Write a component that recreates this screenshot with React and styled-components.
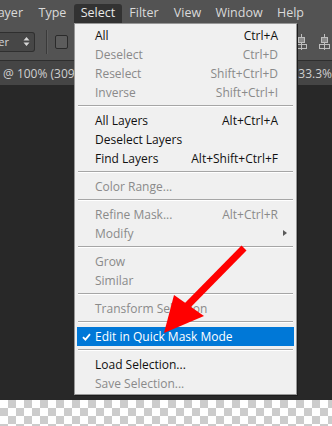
import React from "react";
import styled, { createGlobalStyle } from "styled-components";

const GlobalStyle = createGlobalStyle`
  html, body {
    margin: 0;
    padding: 0;
    background: #282828;
  }
  body {
    font-family: "Open Sans", "Noto Sans", sans-serif;
    overflow: hidden;
  }
`;

const Page = styled.div`
  position: relative;
  width: 332px;
  height: 426px;
  display: flex;
  flex-direction: column;
  overflow: hidden;
`;

const MenuBar = styled.div`
  height: 23px;
  padding-top: 4px;
  box-sizing: border-box;
  background: #535353;
  display: flex;
  align-items: stretch;
`;

const MenuTitle = styled.div`
  flex: 0 0 ${(p) => p.$w}px;
  display: flex;
  justify-content: ${(p) => (p.$clip ? "flex-end" : "center")};
  align-items: center;
  padding-right: ${(p) => (p.$clip ? 8 : 0)}px;
  box-sizing: border-box;
  overflow: hidden;
  white-space: nowrap;
  font-size: 12.5px;
  color: ${(p) => (p.$open ? "#e8e8e8" : "#dadada")};
  background: ${(p) => (p.$open ? "#323232" : "transparent")};
  border-radius: 3px 3px 0 0;
  padding-bottom: 2px;
`;

const Toolbar = styled.div`
  height: 38px;
  background: #535353;
  border-bottom: 1px solid #2e2e2e;
  display: flex;
  align-items: center;
  box-sizing: border-box;
`;

const Dropdown = styled.div`
  flex: 0 0 35px;
  height: 20px;
  box-sizing: border-box;
  display: flex;
  justify-content: flex-end;
  align-items: center;
  gap: 14px;
  padding-right: 4px;
  overflow: hidden;
  white-space: nowrap;
  background: #474747;
  border: 1px solid #2f2f2f;
  border-left: none;
  border-radius: 0 3px 3px 0;
  font-size: 11px;
  color: #d6d6d6;
`;

const Arrows = styled.svg`
  flex: 0 0 auto;
`;

const Divider = styled.div`
  width: 1px;
  height: 24px;
  margin: 0 8px 0 11px;
  background: #3a3a3a;
  box-shadow: 1px 0 0 #5e5e5e;
`;

const CheckBox = styled.div`
  width: 13px;
  height: 14px;
  box-sizing: border-box;
  border: 1px solid #2a2a2a;
  border-radius: 2px;
  background: #5c5c5c;
`;

const Spacer = styled.div`
  flex: 1;
`;

const AlignIcons = styled.svg`
  flex: 0 0 auto;
  margin-right: 1px;
`;

const TabBar = styled.div`
  height: 24px;
  background: #454545;
  display: flex;
  align-items: center;
  justify-content: space-between;
  padding: 0 0 0 3px;
  font-size: 12px;
  color: #cfcfcf;
  white-space: nowrap;
  overflow: hidden;
`;

const Canvas = styled.div`
  flex: 1;
  background: #282828;
`;

const Checker = styled.div`
  height: 26px;
  background-color: #fff;
  background-image: conic-gradient(
    #cccccc 0 25%,
    #ffffff 0 50%,
    #cccccc 0 75%,
    #ffffff 0
  );
  background-size: 16px 16px;
`;

const MenuPanel = styled.div`
  position: absolute;
  left: 74px;
  top: 23px;
  width: 223px;
  box-sizing: border-box;
  padding: 2px 2px 1px;
  background: #f0f0f0;
  border: 1px solid #979797;
  box-shadow: 1px 1px 0 #1c1c1c;
  display: flex;
  flex-direction: column;
`;

const Item = styled.div`
  height: 19px;
  display: flex;
  align-items: center;
  font-size: 12px;
  color: ${(p) => (p.$active ? "#fff" : p.$disabled ? "#8a8a8a" : "#111")};
  background: ${(p) => (p.$active ? "#0078d7" : "transparent")};
  white-space: nowrap;
  position: relative;
`;

const CheckCol = styled.div`
  flex: 0 0 18px;
  display: flex;
  justify-content: center;
  align-items: center;
`;

const Label = styled.span`
  flex: 1;
`;

const Shortcut = styled.span`
  padding-right: 16px;
`;

const SubArrow = styled.span`
  position: absolute;
  right: 7px;
  top: 6px;
  width: 0;
  height: 0;
  border-top: 3.5px solid transparent;
  border-bottom: 3.5px solid transparent;
  border-left: 4px solid #5a5a5a;
`;

const Separator = styled.div`
  height: 1px;
  margin: 3px 1px 4px;
  background: #a6a6a6;
  border-bottom: 1px solid #ffffff;
`;

const Overlay = styled.svg`
  position: absolute;
  left: 0;
  top: 0;
  pointer-events: none;
`;

const titles = [
  { text: "Layer", w: 31, clip: true },
  { text: "Type", w: 43 },
  { text: "Select", w: 48, open: true },
  { text: "Filter", w: 44 },
  { text: "View", w: 43 },
  { text: "Window", w: 60 },
  { text: "Help", w: 43 },
];

const menu = [
  [
    { label: "All", key: "Ctrl+A" },
    { label: "Deselect", key: "Ctrl+D", disabled: true },
    { label: "Reselect", key: "Shift+Ctrl+D", disabled: true },
    { label: "Inverse", key: "Shift+Ctrl+I", disabled: true },
  ],
  [
    { label: "All Layers", key: "Alt+Ctrl+A" },
    { label: "Deselect Layers" },
    { label: "Find Layers", key: "Alt+Shift+Ctrl+F" },
  ],
  [{ label: "Color Range...", disabled: true }],
  [
    { label: "Refine Mask...", key: "Alt+Ctrl+R", disabled: true },
    { label: "Modify", disabled: true, sub: true },
  ],
  [
    { label: "Grow", disabled: true },
    { label: "Similar", disabled: true },
  ],
  [{ label: "Transform Selection", disabled: true }],
  [{ label: "Edit in Quick Mask Mode", active: true, checked: true }],
  [
    { label: "Load Selection..." },
    { label: "Save Selection...", disabled: true },
  ],
];

const Check = () => (
  <svg width="9" height="8" viewBox="0 0 9 8">
    <path d="M1 4.2 L3.4 6.6 L8 1.2" fill="none" stroke="#fff" strokeWidth="1.8" />
  </svg>
);

const App = () => {
  return (
    <>
      <GlobalStyle />
      <Page>
        <MenuBar>
          {titles.map((t) => (
            <MenuTitle key={t.text} $w={t.w} $clip={t.clip} $open={t.open}>
              {t.text}
            </MenuTitle>
          ))}
        </MenuBar>
        <Toolbar>
          <Dropdown>
            <span>Layer</span>
            <Arrows width="7" height="11" viewBox="0 0 7 11">
              <path d="M0.5 4.5 L3.5 1 L6.5 4.5 Z M0.5 6.5 L3.5 10 L6.5 6.5 Z" fill="#d6d6d6" />
            </Arrows>
          </Dropdown>
          <Divider />
          <CheckBox />
          <Spacer />
          <AlignIcons width="38" height="22" viewBox="0 0 38 22">
            <g fill="none" stroke="#bdbdbd" strokeWidth="1">
              <line x1="8.5" y1="3" x2="8.5" y2="19" />
              <rect x="5.5" y="6.5" width="6" height="5" fill="#8a8a8a" />
              <rect x="3.5" y="13.5" width="10" height="4" />
              <line x1="31.5" y1="3" x2="31.5" y2="19" />
              <rect x="28.5" y="6.5" width="6" height="5" fill="#8a8a8a" />
              <rect x="26.5" y="13.5" width="10" height="4" />
            </g>
          </AlignIcons>
        </Toolbar>
        <TabBar>
          <span>@ 100% (309, 3</span>
          <span>33.3%</span>
        </TabBar>
        <Canvas />
        <Checker />

        <MenuPanel>
          {menu.map((group, gi) => (
            <React.Fragment key={gi}>
              {gi > 0 && <Separator />}
              {group.map((it) => (
                <Item key={it.label} $disabled={it.disabled} $active={it.active}>
                  <CheckCol>{it.checked && <Check />}</CheckCol>
                  <Label>{it.label}</Label>
                  {it.key && <Shortcut>{it.key}</Shortcut>}
                  {it.sub && <SubArrow />}
                </Item>
              ))}
            </React.Fragment>
          ))}
        </MenuPanel>

        <Overlay width="332" height="426" viewBox="0 0 332 426">
          <line x1="244" y1="248" x2="184" y2="309" stroke="#ff0000" strokeWidth="7" />
          <polygon points="164,333 174,295 204,316" fill="#ff0000" />
        </Overlay>
      </Page>
    </>
  );
};

export default App;
